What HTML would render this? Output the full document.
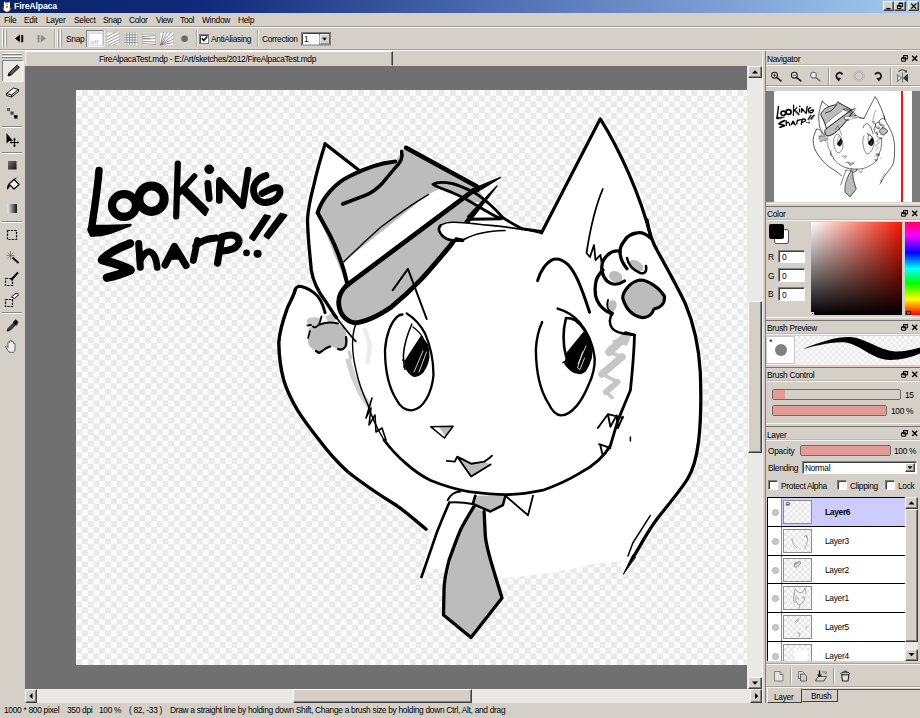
<!DOCTYPE html>
<html><head><meta charset="utf-8"><title>FireAlpaca</title>
<style>
*{box-sizing:border-box;margin:0;padding:0}
html,body{width:920px;height:718px;overflow:hidden;background:#d4d0c8}
body{position:relative;font-family:"Liberation Sans",sans-serif;font-size:8.4px;color:#000;line-height:1;letter-spacing:-0.3px}
.a{position:absolute}
.t{position:absolute;white-space:nowrap;line-height:10px;height:10px}
.hl{position:absolute;height:1px}
.vl{position:absolute;width:1px}
.btn{position:absolute;background:#d4d0c8;border:1px solid;border-color:#fff #404040 #404040 #fff;box-shadow:inset -1px -1px 0 #808080}
.sunk{position:absolute;background:#fff;border:1px solid;border-color:#808080 #fff #fff #808080;box-shadow:inset 1px 1px 0 #404040}
.bar{position:absolute;height:11px;border:1px solid #6b6b6b;border-radius:2px;background:#d4d0c8;overflow:hidden}
.bar i{position:absolute;left:0;top:0;bottom:0;background:#e29a96;display:block}
.chk{position:absolute;width:10px;height:10px;background:#fff;border:1px solid;border-color:#808080 #fff #fff #808080;box-shadow:inset 1px 1px 0 #404040}
.eye{position:absolute;left:4px;top:11px;width:7px;height:7px;border-radius:4px;background:#c9c9c9;border:1px solid #b0b0b0}
.th{position:absolute;left:15px;top:2px;width:29px;height:24px;border:1px solid #8c8c8c;background:conic-gradient(#e6e6e6 25%,#fbfbfb 0 50%,#e6e6e6 0 75%,#fbfbfb 0) 0 0/5.75px 5.75px}
.ck{background:conic-gradient(#e9e9e9 25%,#fbfbfb 0 50%,#e9e9e9 0 75%,#fbfbfb 0) 0 0/11.5px 11.5px}
</style></head><body>
<div class="a" id="titlebar" style="left:0;top:0;width:920px;height:13px;background:linear-gradient(90deg,#0a246a 0%,#10297a 22%,#5577b8 58%,#a6caf0 100%)"></div>
<div class="t" style="left:14px;top:1px;color:#fff;font-weight:bold;font-size:8.8px;letter-spacing:-0.2px">FireAlpaca</div>
<svg class="a" style="left:0;top:0" width="14" height="13" viewBox="0 0 14 13">
 <circle cx="6.900" cy="6.800" r="5.100" fill="#1a1008"/>
 <path d="M2.300 6.500c0 3 1.500 5 4.600 5.200c3-.2 4.600-2.200 4.600-5.200c-.8 1.500-1.500 2-2.500 2.300h-4.200c-1-.3-1.800-1-2.500-2.300z" fill="#e8660c"/>
 <path d="M4.300 1.200l.9 1.300h3.400l.9-1.300l.5 2.500v5c0 1.800-1.200 2.900-3.100 2.900s-3.100-1.100-3.100-2.900v-5z" fill="#fff"/>
 <rect x="6" y="3.300" width="1.700" height="1.600" fill="#aaa"/>
 <rect x="6" y="6.700" width="1.800" height="1" fill="#d4500a"/>
 <rect x="5.800" y="5.800" width="2.200" height=".7" fill="#556"/>
</svg>
<div class="btn" style="left:883px;top:1px;width:11px;height:10px"></div>
<div class="btn" style="left:894px;top:1px;width:12px;height:10px"></div>
<div class="btn" style="left:908px;top:1px;width:11px;height:10px"></div>
<svg class="a" style="left:880px;top:0" width="40" height="13" viewBox="880 0 40 13">
 <path d="M886 8.6h4.5" stroke="#000" stroke-width="1.4"/>
 <path d="M899 3.2h3.6v3.2h-3.6zM897.4 5.6h3.6v3h-3.6z" fill="none" stroke="#000" stroke-width="1"/>
 <path d="M899 3.4h3.6M897.4 5.8h3.6" stroke="#000" stroke-width="1.3"/>
 <path d="M911.2 3.6l5 5M916.2 3.6l-5 5" stroke="#000" stroke-width="1.3"/>
</svg>
<div class="t" style="left:4px;top:15px">File</div>
<div class="t" style="left:24px;top:15px">Edit</div>
<div class="t" style="left:46px;top:15px">Layer</div>
<div class="t" style="left:74px;top:15px">Select</div>
<div class="t" style="left:103px;top:15px">Snap</div>
<div class="t" style="left:129px;top:15px">Color</div>
<div class="t" style="left:156px;top:15px">View</div>
<div class="t" style="left:180px;top:15px">Tool</div>
<div class="t" style="left:202px;top:15px">Window</div>
<div class="t" style="left:238px;top:15px">Help</div>
<div class="hl" style="left:0;top:26px;width:920px;background:#a5a29b"></div>
<div class="hl" style="left:0;top:27px;width:920px;background:#f4f3f0"></div>
<svg class="a" style="left:0;top:27px" width="340" height="24" viewBox="0 27 340 24">
 <!-- grips -->
 <g stroke-width="1">
  <path d="M2.5 29.5v18M5.5 29.5v18M57.5 29.5v18M60.5 29.5v18" stroke="#fff"/>
  <path d="M3.5 29.5v18M6.5 29.5v18M58.5 29.5v18M61.5 29.5v18" stroke="#a09d96"/>
  <path d="M54.5 29v19M196.500 30v17M257.5 30v17" stroke="#aeaba4"/>
  <path d="M55.5 29v19M197.500 30v17M258.5 30v17" stroke="#efede9"/>
 </g>
 <!-- prev / next -->
 <path d="M15 38.5l5-4v8zM21.3 35h1.9v7.2h-1.9z" fill="#000"/>
 <path d="M45.8 38.500l-5-4v8zM37.600 35h1.900v7.200h-1.900z" fill="#8a8a8a"/>
 <!-- snap off (sunken) -->
 <rect x="86.500" y="30.500" width="17" height="16" fill="#e6e3dd" stroke="#808080"/>
 <path d="M87 46.500h17v-16" fill="none" stroke="#fff"/>
 <rect x="89" y="33.300" width="13.500" height="12.300" fill="#fff" stroke="#c8c8c8" stroke-width=".6"/>
 <text x="91" y="44.300" font-size="5.500" fill="#9a9a9a" font-family="Liberation Sans" letter-spacing=".6">off</text>
 <!-- diag -->
 <g stroke="#7a7a7a" stroke-width=".8" fill="#fff">
  <rect x="106.600" y="32.200" width="13.200" height="13" stroke="#c0c0c0" stroke-width=".6"/>
  <path d="M106.600 37l9-4.800M106.600 40l13.200-6.500M106.600 43l13.200-6.500M108 45.200l11.800-5.700M113 45.200l6.800-3.200"/>
  <rect x="124.200" y="32.200" width="13.500" height="13" stroke="#c0c0c0" stroke-width=".6"/>
  <path d="M126.800 32.200v13M129.500 32.200v13M132.200 32.200v13M134.900 32.200v13M124.200 34.800h13.500M124.200 37.400h13.500M124.200 40h13.500M124.200 42.600h13.500"/>
  <rect x="142.200" y="32.200" width="13.300" height="13" stroke="#c0c0c0" stroke-width=".6"/>
  <path d="M142.200 34h13.300M142.200 36.500l13.300-.8M142.200 39l13.300 -.3M142.200 41.200l13.300 .8M142.200 43.500l13.300 .9M142.200 37.800l8 1"/>
  <rect x="160" y="32.200" width="13.500" height="13" stroke="#c0c0c0" stroke-width=".6"/>
  <path d="M160.500 45l3-12.800M160.500 45l6.500-12.800M160.500 45l10.500-12.800M160.500 45l13-10M160.500 45l13-6M160.500 45l13-2.500"/>
 </g>
 <circle cx="184.600" cy="38.700" r="3.300" fill="#6a6a6a"/>
 <!-- checkbox -->
 <rect x="199.500" y="34.500" width="9" height="9" fill="#fff" stroke="#808080"/>
 <path d="M200.500 43v-7.500h7.500" fill="none" stroke="#404040"/>
 <path d="M201.800 38.300l1.900 2.200l3.500-4" fill="none" stroke="#000" stroke-width="1.500"/>
 <!-- combo -->
 <rect x="301.500" y="32.500" width="29" height="12.500" fill="#fff" stroke="#808080"/>
 <path d="M302.500 44.500v-11h27.500" fill="none" stroke="#404040"/>
 <rect x="319.500" y="34" width="10" height="10" fill="#d4d0c8" stroke="#404040" stroke-width=".8"/>
 <path d="M320 43.500v-9h9" fill="none" stroke="#fff"/>
 <path d="M322 37.800h5l-2.500 2.800z" fill="#000"/>
</svg>
<div class="t" style="left:66px;top:34px">Snap</div>
<div class="t" style="left:211px;top:34px">AntiAliasing</div>
<div class="t" style="left:262px;top:34px">Correction</div>
<div class="t" style="left:304px;top:34px">1</div>
<div class="hl" style="left:0;top:49px;width:920px;background:#a5a29b"></div>
<div class="hl" style="left:0;top:50px;width:920px;background:#f4f3f0"></div>
<svg class="a" style="left:0;top:51px" width="25" height="310" viewBox="0 51 25 310">
 <!-- grip -->
 <path d="M2 53.500h20M2 56.500h20" stroke="#fff"/>
 <path d="M2 54.500h20M2 57.500h20" stroke="#808080"/>
 <!-- selected pencil -->
 <rect x="2" y="60" width="21" height="21" fill="#ebe9e4"/>
 <path d="M2.500 81v-20.500h20.500" fill="none" stroke="#808080"/>
 <path d="M2.500 81.500h20.500v-21" fill="none" stroke="#fff"/>
 <path d="M8 76l1.200-3.500l8-7.500l2.300 2.300l-8 7.500z" fill="#555" stroke="#000" stroke-width=".8"/>
 <path d="M8 76l1.200-3.500l2.300 2.300z" fill="#000"/>
 <!-- eraser -->
 <path d="M6.500 93.500l7-5.500l5 1.500l-7 5.500z M6.500 93.500v2l5 1.500v-2 M11.500 97l7-5.500v-2" fill="#eee" stroke="#000" stroke-width=".9" stroke-linejoin="round"/>
 <!-- dot tool -->
 <rect x="7" y="108" width="3.200" height="3.200" fill="#666"/><rect x="10.500" y="111.500" width="3.200" height="3.200" fill="#444"/><rect x="14" y="115" width="3.500" height="3.500" fill="#000"/>
 <path d="M2 126.500h20M2 152.500h20M2 221.500h20M2 312.500h20" stroke="#8a8780"/>
 <path d="M2 127.500h20M2 153.500h20M2 222.500h20M2 313.500h20" stroke="#fff"/>
 <!-- move -->
 <path d="M6.500 133v10.500l2.800-2.500l3.700 0z" fill="#000"/>
 <path d="M14.500 139v7M11 142.500h7" stroke="#000" stroke-width="1.200"/>
 <path d="M14.500 137.800l-1.500 1.800h3zM14.500 147.200l-1.500-1.800h3zM9.800 142.500l1.800-1.500v3zM19.200 142.500l-1.800-1.500v3z" fill="#000"/>
 <!-- fill rect -->
 <defs><linearGradient id="g1" x1="0" y1="0" x2="1" y2="1"><stop offset="0" stop-color="#777"/><stop offset="1" stop-color="#111"/></linearGradient>
 <linearGradient id="g2" x1="0" y1="0" x2="1" y2="0"><stop offset="0" stop-color="#eee"/><stop offset="1" stop-color="#111"/></linearGradient></defs>
 <rect x="8" y="161" width="8.500" height="8.500" fill="url(#g1)"/>
 <!-- bucket -->
 <path d="M9 184l5-4.500l5 5l-5 4.500z" fill="#fff" stroke="#000" stroke-width="1.200" stroke-linejoin="round"/>
 <path d="M9 184c-2 1-2.500 3.500-1.500 6c1-2 2-3.500 3-4.500z" fill="#000"/>
 <path d="M14 179.500l2.500-1.500" stroke="#000"/>
 <!-- gradient -->
 <rect x="7.500" y="204" width="9.500" height="9" fill="url(#g2)"/>
 <!-- select rect -->
 <rect x="7.500" y="230.500" width="9" height="9" fill="none" stroke="#000" stroke-width="1.200" stroke-dasharray="2.200 1.200"/>
 <!-- wand -->
 <path d="M12.500 257.500l6 5.500" stroke="#000" stroke-width="1.800"/>
 <path d="M10.500 251v9M6.500 255.500h8M7.800 252.500l5.500 6M13.300 252.500l-5.500 6" stroke="#666" stroke-width=".7"/>
 <!-- select pen -->
 <rect x="5.500" y="278.500" width="7" height="7" fill="none" stroke="#000" stroke-width="1.200" stroke-dasharray="2.200 1.200"/>
 <path d="M11 280l7-7.500" stroke="#000" stroke-width="2"/>
 <!-- select eraser -->
 <rect x="5.500" y="299.500" width="7" height="7" fill="none" stroke="#000" stroke-width="1.200" stroke-dasharray="2.200 1.200"/>
 <path d="M11.500 297l4.500-4l3 1.500l-4.500 4z" fill="#eee" stroke="#000" stroke-width=".9"/>
 <!-- eyedropper -->
 <path d="M7 331l1-2.500l6-6l2 2l-6 6z" fill="#444" stroke="#000" stroke-width=".8"/>
 <path d="M13.500 321.500l3.500 3.500M15 320l3 3" stroke="#000" stroke-width="1.800"/>
 <!-- hand -->
 <path d="M9 352c-1.500-2-3-4-3.500-5.500c.5-1 1.500-.5 2.500 1v-5c.5-1 1.500-1 1.800 0v-1.500c.5-1 1.500-1 1.800 0v1c.5-1 1.500-.8 1.800 .2v1.300c.5-.8 1.500-.5 1.600 .5v5c0 1.500-.8 2.500-1.500 3.500z" fill="#eee" stroke="#444" stroke-width=".8" stroke-linejoin="round"/>
</svg>
<div class="a" style="left:25px;top:51px;width:368px;height:15px;border:1px solid;border-color:#fff #404040 #d4d0c8 #fff;box-shadow:inset -1px 0 0 #808080"></div>
<div class="t" style="left:99px;top:54px">FireAlpacaTest.mdp - E:/Art/sketches/2012/FireAlpacaTest.mdp</div>
<div class="a" id="work" style="left:25px;top:66px;width:722px;height:623px;background:#707070"></div>
<div class="a ck" id="canvas" style="left:76px;top:90px;width:671px;height:575px;background-size:11.51px 11.5px;background-position:0.35px 0"></div>
<svg class="a" style="left:76px;top:90px" width="671" height="575" viewBox="76 90 671 575">
<g id="artw" fill="#fff" stroke="#fff" stroke-width="4.5" stroke-linejoin="round">
 <!-- white body fill -->
 <path d="M325 143 L359 170 C372 165 385 162 395 161 L401.6 151 L406 147.5 L477 186 L490.5 205 L502.7 216.5 L521.9 228 L541.4 232.9 L600.3 118 C620 150 640 195 650.5 235 C652 242 655 247 658 252 C668 270 678 288 685.3 303.6 C693 322 698.8 345 700.3 372 C701.4 400 700.6 425 698.5 442 C696.5 458 693 470 687.5 479 C680 491 668 505 657.9 517.8 C651 527 645 537 640.3 545.4 L624 573 L623 558 L590 562 L574.8 566 L540 572 L503.5 576 L449 567 L425 566 L435.5 523 L426 529.2 C416 521 405 511 395 504.5 C378 494 362 483 348 472 C338 463 328 452 318 438.5 C312 431 305 422 297.6 410.4 C290 398 280 370 278.8 342.7 C279 325 281 312 285 305 L294 288 L307.7 285 L318 292 L312.6 262 C308 240 307 225 308 215 C310 190 318 160 325 143Z"/>
</g>
<g id="artg" fill="#bcbcbc" stroke="none">
 <!-- hat crown -->
 <path d="M317.6 212.8 C322 198 335 183 350 176 C365 168 380 163 395.3 161.4 L401.6 151.4 L406 147.8 L477 186.5 L487 204 L470 201 L452 192.5 L438.7 189.5 L428.3 194.6 L343.9 261.7 L347 286 Z"/>
 <!-- hat brim -->
 <path d="M346.4 285.6 L463 196.5 L479 206.5 L469.6 218.3 L450.5 245.4 C440 258 430 270 420.4 280.2 C410 291 400 300 390.3 307.8 C378 316 366 322 355.2 322.8 C345 322 338 313 338.9 305.2 Z"/>
 <!-- band (white) -->
 <path d="M343.9 261.7 L428.3 194.6 L438.7 189.5 L452 192.5 L463.5 197.8 L347 286 Z" fill="#fff"/>
 <!-- left paw pad -->
 <path d="M308.800 328.900 C311.300 325.100 315 324 321.400 323.900 C330 322.600 335 322 340.200 325.100 C344 328 346.500 332 346.400 335.200 C347 340 346.500 343 346.400 345.200 C344 349 342 350 340.200 350.200 C336 348 333 346.500 330.100 346.400 C326 348 323.500 351 321.400 351.500 C318 351.500 316.500 350.500 315.100 350.200 C311.500 348.500 309.500 346.500 308.800 345.200 C307.500 340 307.500 333 308.800 328.900Z"/>
 <path d="M306.900 320.100 C308 317.500 312 317 317.600 317.600 C320 318 321.500 319 321.400 320.100 C321.500 323 320.500 324.500 320.100 325.100 L311.300 326.400 C308.500 326 307 324 306.900 320.100Z" fill="#c8c8c8"/>
 <path d="M325.500 316 L333 313.500 L337 320 L328 323Z" fill="#c8c8c8"/>
 <!-- right paw pads -->
 <ellipse cx="635.7" cy="266" rx="8" ry="5.3" transform="rotate(28 635.7 266)"/>
 <ellipse cx="615.7" cy="276.6" rx="7" ry="5.3" transform="rotate(25 615.7 276.6)"/>
 <ellipse cx="612" cy="306" rx="4.5" ry="6" transform="rotate(20 612 306)"/>
 <path d="M640 280 C648 280 660 288 664.5 296.6 C665 304 660 308 654 309 C652 315 647 318 641.8 317.5 C633 316 626 309 622.7 298.3 C623 290 632 281 640 280Z"/>
 <!-- cheek scribble right -->
 <g fill="none" stroke="#c6c6c6" stroke-linecap="round" stroke-linejoin="round">
  <path d="M626 336 L609 352" stroke-width="8"/>
  <path d="M622 357 L602 374" stroke-width="7.500"/>
  <path d="M617.500 382 L606 392" stroke-width="6"/>
  <path d="M609 352 L622 357 M602 374 L617.500 382 M606 392 L612 397.500" stroke-width="3.500"/>
 </g>
 <path d="M611 341 L632 333.500 L627 346Z" fill="#c6c6c6"/>
 <!-- left cheek shading -->
 <path d="M348.500 361 L353 376 L360 392 L369 406" fill="none" stroke="#d0d0d0" stroke-width="5.500" stroke-linecap="round" stroke-linejoin="round"/>
 <path d="M349 352 L351 358" fill="none" stroke="#c8c8c8" stroke-width="3" stroke-linecap="round"/>
 <path d="M365 330 L370 345 L368 362" fill="none" stroke="#ececec" stroke-width="4.500" stroke-linecap="round"/>
 <!-- nose -->
 <path d="M439 427 L453 426.2 L445 436Z"/>
 <!-- mouth -->
 <path d="M457.2 456.700 L471.100 476.500 L490.600 464.500 L484.300 461.600 L471.100 463.700Z"/>
 <!-- tie knot and body -->
 <path d="M475.3 495.7 L505.4 495.7 L502.9 505.2 L490.4 511.5 L472.8 504Z"/>
 <path d="M474 506.5 L484.1 511.5 C485 525 487 545 492.9 568 L502 598 L471 637.5 L443.5 615 C444 590 448 565 460.3 530.3 Z"/>
</g>
<g id="artl" fill="none" stroke="#000" stroke-width="3.300" stroke-linecap="round" stroke-linejoin="round">
 <!-- TEXT -->
 <g stroke-width="7">
  <path d="M99 170.500 C97.500 190 94 212 91.300 230" stroke-width="7.400"/>
  <path d="M88.500 229 L91 235.500 C105 236.500 118 230 130.500 225 C118 226 105 226 95 226 Z" fill="#000" stroke-width="2.500"/>
  <ellipse cx="124" cy="205.500" rx="12" ry="11.300" stroke-width="8.200"/>
  <ellipse cx="151.500" cy="198.700" rx="12.700" ry="12.700" stroke-width="9"/>
  <path d="M177.800 163.500 L176.200 216.500" stroke-width="6.200"/>
  <path d="M177 195.500 L194.500 176" stroke-width="5.600"/>
  <path d="M179.500 189.500 L184.500 186.500 L207.500 209.500 L205 214.500 Z" fill="#000" stroke-width="3"/>
  <path d="M209.200 169.300 L209.300 169.300" stroke-width="9.600"/>
  <path d="M207.800 183.500 L209.200 198.500" stroke-width="6.800"/>
  <path d="M219.300 182.500 L219.300 200.500 M219.600 180.500 L242.600 205.800 L248.200 170" stroke-width="6.600"/>
  <path d="M266 175.500 C258 178 253 184 253.500 191 C254.500 199 260 203 266 202.500 C274 202 280.500 196.500 280 190.500 C279.600 185.500 274 187 262 193.500" stroke-width="6.800"/>
  <path d="M130 243.500 C118 248 107 254 102 260 C112 262.500 124 266 130.500 270 C123 273.500 114 276 107 277.600" stroke-width="8.600"/>
  <path d="M138.700 243.500 L140.300 267.300" stroke-width="7"/>
  <path d="M140.300 260.400 C143 254.500 147 251 150 251.800 C154 253 156.500 260 157.200 267.500" stroke-width="6.600"/>
  <path d="M165 265 L174.500 246.500 L186 265.500" stroke-width="7.200"/>
  <path d="M169.500 258.500 L174.500 247 L181.500 258 Z" fill="#000" stroke-width="3"/>
  <path d="M197.500 240.500 L193.300 260.500 M195.700 246 C200 241.500 206 238.500 216 238" stroke-width="6.800"/>
  <path d="M222 237 L217.500 263.200" stroke-width="7"/>
  <path d="M222 237 C228 234.500 234 234 237.500 237.500 C241 241.500 238 246.500 233 248.800 C230 250 226 250.800 222.500 251" stroke-width="7"/>
  <path d="M246.500 252.800 L246.600 252.800" stroke-width="6.800"/>
  <path d="M257.500 253.800 L257.600 253.800" stroke-width="8"/>
 </g>
 <path d="M269.500 216.500 L265 215.500 L250.500 237.500 L253.800 239.800Z M286 215.500 L280.800 214 L265 235.500 L268.500 238Z" fill="#000" stroke-width="2.800"/>

 <!-- left ear -->
 <path d="M325.1 143.9 C320 160 316 175 313.8 185.2 C310 200 307 212 307.6 222.9 C308 240 310 255 311.300 270 C313 282 319 293 326.400 302.600 C330 308 333 313 336.400 317.600" stroke-width="3.300"/>
 <path d="M336.400 317.600 C343 326 349 334 355.800 341.400" stroke-width="1.800"/>
 <path d="M325.1 143.9 L359 170.2"/>
 <!-- hat crown outline -->
 <path d="M347.7 285.6 L343.9 270.5 C340 258 335 245 330 235.4 L317.6 212.8 C322 198 335 183 350 176 C365 168 380 163 395.3 161.4" stroke-width="4"/>
 <path d="M401.6 151.4 C403 158 401 162 395 168 L382.8 182.7 C377 189 371 193 365.2 195.3 L342.7 204" stroke-width="3.5"/>
 <path d="M406 147.8 L477 186.5" stroke-width="4.5"/>
 <!-- band thin line -->
 <path d="M343.9 261.7 C360 246 372 235 380 227.800 C398 214 414 203 428.300 194.600" stroke-width="1.400"/>
 <!-- brim line + tuft 1 -->
 <path d="M473 190.8 L346.4 285.6 C340 292 338 299 338.9 305.2 C340 315 347 322 355.2 322.8 C366 322 378 316 390.3 307.8 C400 300 410 291 420.4 280.2 C430 270 440 258 450.5 245.4 L469.6 218.3" stroke-width="4.800"/>
 <path d="M471 189.5 L474.5 193.5 L500.6 177.4 Z M467.5 216.5 L471.5 219.5 L497 186 Z" fill="#000" stroke-width="1.2"/>
 <!-- brim loop -->
 <path d="M541 231.4 L521.9 228.8 C515 225 508 221 502.7 217.5 C498 212 494 208 490.5 205 C485 200 479 195 473 192 C465 188 458 185 452 183.5 C444 182 436 182.5 433.1 184.4 C437 187 444 189.5 452 192.5 C460 196 466 199 470 201.5 C477 205.5 482 208.5 487 211.4 C493 215 498 217.5 501.5 218.8 L471.4 219.2" stroke-width="2.900"/>
 <!-- fluff -->
 <path d="M521.9 229.5 C505 226.5 495 226 477 224 C470 223.2 460 222 452 222.3 C445 222.5 437.5 225 439.2 230.5 C441 236 446 239.5 454 241 C458 241.8 462 241 466 238.5 C475 233.5 490 231 505 230.5" fill="#fff" stroke-width="1.6"/>
 <path d="M440.5 225.5 C438 228 439 232 442 235.5 C446 239.5 452 241 458.5 240.2" stroke-width="2.6"/>
 <path d="M456 239.2 L462.5 240.3" stroke-width="3.8"/>
 <!-- tuft on brim -->
 <path d="M392.8 290.2 L407.9 268.9 L426.7 319" stroke-width="2"/>
 <!-- head top + right ear -->
 <path d="M519.5 228 L541.4 232.9" stroke-width="2"/>
 <path d="M541.4 232.9 L600.3 118.8 C620 150 640 195 650.5 235.4" stroke-width="3.2"/>
 <path d="M602.8 189 C596 205 590 230 586.5 253 L590 257 L594 245 L595.5 260 L600.5 255 L601.5 262" stroke-width="1.8"/>
 <!-- right arm outer -->
 <path d="M647 220 C649 232 652 242 658 252 C668 270 678 288 685.3 303.6 C693 322 698.8 345 700.3 372 C701.4 400 700.6 425 698.5 442 C696.5 458 693 470 687.5 479 C680 491 668 505 657.9 517.8 C651 527 645 537 640.3 545.4 L634 556" stroke-width="3.3"/>
 <path d="M635.300 557 L632.600 555.200 L623.500 574Z" fill="#000" stroke-width="1"/>
 <path d="M650.4 515.3 L632.8 543 L628 556" stroke-width="1.5"/>
 <!-- right paw -->
 <path d="M650.5 238 C645 233 640 232 636.6 233 C630 234 626 238 624.4 240.9 C621 245 620 249 620 251.3 C620 258 623 264 627 268.7"/>
 <path d="M627 258 C628 264 633 270 640 273 C645 274.5 647 271 646 266" stroke-width="2.5"/>
 <path d="M620 251.3 C614 250 608 253 603.5 260 C600 267 602 276 607 281 C612 285 617 286 624.4 281"/>
 <path d="M603 270 C598 275 596 280 595.7 282.7 C594 292 596 300 600 305.3 C603 309 607 312 612 314"/>
 <path d="M608 300 C606 306 608 311 612.5 313" stroke-width="2"/>
 <path d="M640 280 C648 280 660 288 664.5 296.6 C665 304 660 308 654 309 C652 315 647 318 641.8 317.5 C633 316 626 309 622.7 298.3 C623 290 632 281 640 280Z" stroke-width="3.2"/>
 <path d="M612.5 313 C609 318 609 324 612 328 C616 333 625 334 634.9 335" stroke-width="2.5"/>
 <!-- jaw right / inner arm -->
 <path d="M625.4 332.6 L634.5 335 C634 355 632 375 630.4 390.3 L617.9 420.4 L610.4 445.5 C605 455 595 465 580.7 472.6 C570 479 555 486 543 490.2 C530 493 518 494.7 505.4 494.7 C492 494.5 480 493 467.8 491.5 C455 489 442 485 430.2 480.2 C420 475 412 469 405 462.6 C396 455 390 448 384 440" stroke-width="2.8"/>
 <path d="M384 440 C378 430 372 418 368 405 C362 392 358 380 356 370 C353 358 352 345 353 336 C353.5 331 354.5 327 356 324" stroke-width="1.4"/>
 <path d="M630.4 437 L630.4 441" stroke-width="1.5"/>
 <!-- fur marks right -->
 <path d="M597.800 428 L607.900 414.200 L610.400 426.700 L616.600 415.400 L617.900 428 L622.900 416.700 M607.900 414.200 L622.900 417.900 M600.300 445.500 L602.800 455.500 L610.400 446.800 M599.100 444.200 L610.400 448" stroke-width="1.900"/>
 <!-- fur marks left -->
 <path d="M372 398 L366 418 L371 408 L369 425 L375 415 L376 432 L382 428 L386 440" stroke-width="1.6"/>
 <!-- right brow -->
 <path d="M537.6 280.6 C540 272 546 262 553.9 259.2 C560 258 564 261 567.7 264.3 C575 272 580 283 589.6 312.3" stroke-width="3"/>
 <!-- left eye -->
 <path d="M406.700 313.400 C414 318 421 326 425 333.400 C430 345 433.500 360 433.500 375 C432 392 424 409 411.800 410.300 C404 410.500 399.500 405.500 396.700 400 C389 388 385 370 385 350 C386 335 391 322 397.500 316.500 C399 315 401 314.500 402.500 314.500" stroke-width="2.300"/>
 <path d="M411.800 324.200 C407 335 404 346 403.400 355 C403.500 361 404 366 405 369.300" stroke-width="1.600"/>
 <path d="M413 327 C417 330 421 334 423 338" stroke-width="1.300"/>
 <path d="M421.300 336.300 L405 361.300 L406.300 368.800 C409 373 412 376 415 376.300 C418 376 420.500 374.500 422.500 372.500 C426 368 428 363 428.800 357.500 C429 353 428.500 349 427.500 345 Z" fill="#000" stroke-width="1.400"/>
 <path d="M423 351 L414 372 M426.500 352 L419 372" stroke="#fff" stroke-width=".8"/>
 <path d="M402.500 360 L406.500 362.500 M403.500 367 L406.500 366" stroke-width="1.300"/>
 <!-- right eye -->
 <path d="M557.600 308.600 C566 311 574 316 579.300 322.100 C587 331 593 344 594.700 358.300 C595 368 592 378 588.300 385.500 C582 401 572 415 561.200 415.400 C555.500 415.500 551.500 410 548.500 403.600 C541 392 536 372 535.900 349.300 C536.500 338 539 329 542.200 322.100" stroke-width="2.400"/>
 <path d="M566 318 C563 330 563 345 566 356 C570 366 575 372 580 373 C586 372 590 362 590.500 349 C589 335 582 325 575 320 C572 318.500 569 318 566 318Z" stroke-width="2.600"/>
 <path d="M583.800 332.500 L567.500 352.500 L565 363.800 C568 368 571 371 575 372.500 C578 373 582 372.500 585 371.300 C588 367 590 362 591.300 357.500 C591.500 352 591 347 590 342.500 Z" fill="#000" stroke-width="1.400"/>
 <path d="M586 346 L578 364 M582.500 352 L577.500 368 L580 369.500 L584.500 358" stroke="#fff" stroke-width=".8"/>
 <path d="M563 362.500 L566.500 361" stroke-width="1.600"/>
 <!-- nose -->
 <path d="M430.6 426.7 L453.1 426.2 L444.4 438Z" stroke-width="1.5"/>
 <!-- mouth -->
 <path d="M446.800 460.900 L454.800 461.600 L457.200 456.700 L471.100 463.700 L484.300 461.600 C487 460 490 458 492 455.700 M458.500 458.500 L471.100 476.500 L490.600 464.500" stroke-width="1.900"/>
 <!-- left paw -->
 <path d="M307.500 325.500 L311 325 M313 326.500 C315 328.500 318 326.500 319.500 323 C320.500 320.500 321 318.500 321.500 316.500" stroke-width="1.800"/>
 <path d="M310 331 L308 338" stroke-width="1.600"/>
 <path d="M319.500 324.500 C325 322.500 332 322 338 323.500" stroke-width="2"/>
 <path d="M346 337 C346.800 341 346.600 344 345.500 346.500 C343.500 349.500 341 350.300 338 349 M316 351 L319 353 L321.500 351.500 C324 349.500 327 347 330.100 346.600" stroke-width="2.200"/>
 <!-- left arm -->
 <path d="M325.100 312.600 C323 304 320 297 313.800 292.600 C308 288.500 302 286.500 298.800 286.300 C296.500 287 295.500 288.500 295 290" stroke-width="3"/>
 <path d="M295.500 289 C294 295 291 300 287.500 307.600 C283 320 279.500 330 278.800 342.700 C279 356 281 370 283.800 380.300 C287 391 292 401 297.600 410.400 C305 422 312 431 318 438.500 C328 452 338 463 348 472 C362 483 378 494 395 504.500 C405 511 416 521 426 529.200" stroke-width="3.400"/>
 <!-- collar -->
 <path d="M447.7 500.2 C450 495 454 492 460.3 491.5 M449 502.5 C456 502 465 502.5 472.8 504 L475.3 495.7" stroke-width="2"/>
 <path d="M505.4 495.7 L528 515.3 L533 495.7" stroke-width="1.8"/>
 <!-- tie -->
 <path d="M475.3 495.7 L472.8 504 L490.4 511.5 L502.9 505.2 L505.4 495.7" stroke-width="2.5"/>
 <path d="M474 506.5 C468 516 464 523 460.3 530.3 C455 543 452 552 449 560.4 C446 572 444 582 444 590.5 L443.5 615 L471 637.5 L502 598 L492.9 568 C489 555 486 545 485.3 535.3 L484.1 511.5" stroke-width="3.3"/>
 <!-- body left -->
 <path d="M449.3 502.8 C445 512 441 522 437 532 L421.5 577" stroke-width="2.6"/>
</g>

</svg>
<div class="a" style="left:747px;top:66px;width:15px;height:623px;background:#ebe9e5"></div>
<div class="btn" style="left:748px;top:66px;width:14px;height:12px"></div>
<div class="btn" style="left:748px;top:677px;width:14px;height:12px"></div>
<div class="btn" style="left:748px;top:301px;width:14px;height:152px"></div>
<div class="a" style="left:25px;top:689px;width:737px;height:14px;background:#ebe9e5"></div>
<div class="btn" style="left:25px;top:689px;width:12px;height:14px"></div>
<div class="btn" style="left:750px;top:689px;width:12px;height:14px"></div>
<div class="btn" style="left:293px;top:689px;width:179px;height:14px"></div>
<svg class="a" style="left:0;top:0" width="920" height="718">
 <path d="M752 73.5h6l-3-3.2z M752 681.5h6l-3 3.2z M32.5 693v6l-3.2-3z M755 693v6l3.2-3z" fill="#000"/>
</svg>
<div class="vl" style="left:762px;top:51px;height:652px;background:#f4f3f0"></div>
<div class="vl" style="left:765px;top:51px;height:652px;background:#808080"></div>
<div class="t" style="left:767px;top:54px">Navigator</div>
<svg class="a" style="left:897px;top:52px" width="24" height="14" viewBox="0 0 24 14">
 <path d="M6.5 3.5h4v3.4h-4zM4.6 5.8h4v3.4h-4z" fill="#d4d0c8" stroke="#000" stroke-width="1"/>
 <path d="M6.5 3.7h4M4.6 6h4" stroke="#000" stroke-width="1.2"/>
 <path d="M15.2 3.8l5 5.2M20.2 3.8l-5 5.2" stroke="#000" stroke-width="1.3"/>
</svg>
<div class="hl" style="left:766px;top:64px;width:154px;background:#bdbab3"></div>
<div class="hl" style="left:766px;top:65px;width:154px;background:#f4f3f0"></div>
<svg class="a" style="left:766px;top:66px" width="154" height="20" viewBox="766 66 154 20">
 <g fill="none" stroke="#222" stroke-width="1.100">
  <circle cx="774.500" cy="75.200" r="2.900" fill="#e8e8e8"/><path d="M776.700 77.400l4.800 4" stroke-width="1.700"/><path d="M773 75.200h3M774.500 73.700v3" stroke-width=".8"/>
  <circle cx="794.300" cy="75.200" r="2.900" fill="#e8e8e8"/><path d="M796.500 77.400l4.800 4" stroke-width="1.700"/><path d="M792.800 75.200h3" stroke-width=".8"/>
  <circle cx="813.500" cy="75.200" r="2.900" fill="#e8e8e8" stroke="#777"/><path d="M815.700 77.400l4.800 4" stroke-width="1.500" stroke="#777"/>
 </g>
 <path d="M828.500 68v17M890.500 68v17" stroke="#9a978f"/><path d="M829.500 68v17M891.500 68v17" stroke="#fff"/>
 <!-- rotate left -->
 <path d="M842.500 74.500c-1-2-4-2.500-5.500-.5c-1.200 1.800-.6 4 1.200 5.200" fill="none" stroke="#222" stroke-width="1.900"/>
 <path d="M836.200 77.500l5 .6l-2.600 3.600z" fill="#222"/>
 <!-- rotate right -->
 <path d="M875 74.500c1-2 4-2.500 5.500-.5c1.200 1.800 .6 4-1.200 5.200" fill="none" stroke="#222" stroke-width="1.900"/>
 <path d="M881.300 77.500l-5 .6l2.600 3.600z" fill="#222"/>
 <!-- sunburst -->
 <g stroke="#aaa" stroke-width=".9">
  <path d="M859 70v3M859 79v3M853 76h3M862 76h3M854.800 71.800l2.100 2.100M861.100 78.100l2.100 2.100M863.200 71.800l-2.100 2.100M856.900 78.100l-2.100 2.100M856.600 70.500l1 2.600M861.400 70.500l-1 2.600M856.600 81.500l1-2.600M861.400 81.500l-1-2.600M853.500 73.700l2.600 1M853.500 78.300l2.600-1M864.500 73.700l-2.600 1M864.500 78.300l-2.600-1"/>
 </g>
 <!-- flip -->
 <path d="M897.500 74.500l4 3.500l-4 3.500z" fill="#e0e0e0" stroke="#555" stroke-width=".8"/>
 <path d="M907.500 74.500l-4 3.500l4 3.500z" fill="#333" stroke="#222" stroke-width=".8"/>
 <path d="M902.500 72.500v10" stroke="#555" stroke-width=".8"/>
 <path d="M898.500 72c1.500-2.500 5.500-3 7.500-.5" fill="none" stroke="#333" stroke-width="1"/><path d="M907 70l-.3 2.800l-2.600-.8z" fill="#333"/>
</svg>
<div class="hl" style="left:766px;top:85px;width:154px;background:#a5a29b"></div><div class="hl" style="left:766px;top:86px;width:154px;background:#f4f3f0"></div>
<div class="a" style="left:766px;top:91px;width:154px;height:111px;background:#7c7c7c"></div>
<div class="a" style="left:774px;top:91px;width:138px;height:111px;background:#fff"></div>
<svg class="a" style="left:774px;top:91px" width="138" height="111" viewBox="76 90 715 575"><use href="#artw" opacity="0"/><use href="#artg"/><use href="#artl"/></svg>
<div class="a" style="left:901px;top:91px;width:2px;height:111px;background:#f0161c"></div>
<div class="hl" style="left:766px;top:203px;width:154px;background:#f4f3f0"></div>
<div class="hl" style="left:766px;top:206px;width:154px;background:#77746f"></div>
<div class="t" style="left:767px;top:209px">Color</div>
<svg class="a" style="left:897px;top:207px" width="24" height="14" viewBox="0 0 24 14">
 <path d="M6.5 3.5h4v3.4h-4zM4.6 5.8h4v3.4h-4z" fill="#d4d0c8" stroke="#000" stroke-width="1"/>
 <path d="M6.5 3.7h4M4.6 6h4" stroke="#000" stroke-width="1.2"/>
 <path d="M15.2 3.8l5 5.2M20.2 3.8l-5 5.2" stroke="#000" stroke-width="1.3"/>
</svg>
<div class="hl" style="left:766px;top:219px;width:154px;background:#bdbab3"></div>
<div class="hl" style="left:766px;top:220px;width:154px;background:#f4f3f0"></div>
<div class="a" style="left:774px;top:229px;width:15px;height:15px;background:#fff;border:1px solid #555;border-radius:2px"></div>
<div class="a" style="left:769px;top:224px;width:15px;height:15px;background:#000;border-radius:2px"></div>
<div class="t" style="left:768px;top:252px">R</div>
<div class="t" style="left:768px;top:271px">G</div>
<div class="t" style="left:768px;top:289px">B</div>
<div class="sunk" style="left:778px;top:250px;width:27px;height:13px"></div>
<div class="sunk" style="left:778px;top:268px;width:27px;height:14px"></div>
<div class="sunk" style="left:778px;top:287px;width:27px;height:14px"></div>
<div class="t" style="left:782px;top:252px">0</div>
<div class="t" style="left:782px;top:271px">0</div>
<div class="t" style="left:782px;top:290px">0</div>
<div class="a" style="left:811px;top:222px;width:91px;height:93px;background:linear-gradient(0deg,#000,rgba(0,0,0,0)),linear-gradient(90deg,#fff,#f81800)"></div>
<div class="a" style="left:905px;top:222px;width:15px;height:93px;background:linear-gradient(180deg,#ff0060 0%,#ff00ff 14%,#0000ff 33%,#00ffff 50%,#00ff00 66%,#ffff00 83%,#ff0000 100%)"></div>
<div class="a" style="left:811px;top:312px;width:3px;height:3px;border:1px solid #ddd"></div>
<div class="a" style="left:906px;top:311px;width:5px;height:4px;border:1px solid #222;background:#d33"></div>
<div class="hl" style="left:766px;top:317px;width:154px;background:#f4f3f0"></div>
<div class="hl" style="left:766px;top:320px;width:154px;background:#77746f"></div>
<div class="t" style="left:767px;top:323px">Brush Preview</div>
<svg class="a" style="left:897px;top:321px" width="24" height="14" viewBox="0 0 24 14">
 <path d="M6.5 3.5h4v3.4h-4zM4.6 5.8h4v3.4h-4z" fill="#d4d0c8" stroke="#000" stroke-width="1"/>
 <path d="M6.5 3.7h4M4.6 6h4" stroke="#000" stroke-width="1.2"/>
 <path d="M15.2 3.8l5 5.2M20.2 3.8l-5 5.2" stroke="#000" stroke-width="1.3"/>
</svg>
<div class="hl" style="left:766px;top:333px;width:154px;background:#bdbab3"></div>
<div class="hl" style="left:766px;top:334px;width:154px;background:#f4f3f0"></div>
<div class="a ck" style="left:795px;top:336px;width:125px;height:28px;background-size:5.75px 5.75px"></div>
<div class="a" style="left:766px;top:336px;width:29px;height:28px;background:#fff;border:1px solid #c8c8c8"></div>
<div class="a" style="left:775px;top:344px;width:12px;height:12px;border-radius:6px;background:#808080"></div>
<div class="t" style="left:769px;top:337px;font-size:9px">*</div>
<svg class="a" style="left:795px;top:335px" width="125" height="29" viewBox="795 335 125 29">
 <path d="M803 349 C822 341 838 336.500 850 337 C866 338 878 350 895 351.500 C905 351.500 913 349.500 920 347.500 L920 353.500 C912 357 902 360 890 360 C872 359.500 862 345.500 846 342.500 C832 341 815 346 803 349Z" fill="#000"/>
</svg>
<div class="hl" style="left:766px;top:364px;width:154px;background:#f4f3f0"></div>
<div class="hl" style="left:766px;top:367px;width:154px;background:#77746f"></div>
<div class="t" style="left:767px;top:370px">Brush Control</div>
<svg class="a" style="left:897px;top:368px" width="24" height="14" viewBox="0 0 24 14">
 <path d="M6.5 3.5h4v3.4h-4zM4.6 5.8h4v3.4h-4z" fill="#d4d0c8" stroke="#000" stroke-width="1"/>
 <path d="M6.5 3.7h4M4.6 6h4" stroke="#000" stroke-width="1.2"/>
 <path d="M15.2 3.8l5 5.2M20.2 3.8l-5 5.2" stroke="#000" stroke-width="1.3"/>
</svg>
<div class="hl" style="left:766px;top:380px;width:154px;background:#bdbab3"></div>
<div class="hl" style="left:766px;top:381px;width:154px;background:#f4f3f0"></div>
<div class="bar" style="left:772px;top:389px;width:129px"><i style="width:12px"></i></div>
<div class="bar" style="left:772px;top:405px;width:115px"><i style="width:115px"></i></div>
<div class="t" style="left:905px;top:390px">15</div>
<div class="t" style="left:891px;top:406px">100 %</div>
<div class="hl" style="left:766px;top:423px;width:154px;background:#f4f3f0"></div>
<div class="hl" style="left:766px;top:426px;width:154px;background:#77746f"></div>
<div class="t" style="left:767px;top:430px">Layer</div>
<svg class="a" style="left:897px;top:427px" width="24" height="14" viewBox="0 0 24 14">
 <path d="M6.5 3.5h4v3.4h-4zM4.6 5.8h4v3.4h-4z" fill="#d4d0c8" stroke="#000" stroke-width="1"/>
 <path d="M6.5 3.7h4M4.6 6h4" stroke="#000" stroke-width="1.2"/>
 <path d="M15.2 3.8l5 5.2M20.2 3.8l-5 5.2" stroke="#000" stroke-width="1.3"/>
</svg>
<div class="hl" style="left:766px;top:439px;width:154px;background:#bdbab3"></div>
<div class="hl" style="left:766px;top:440px;width:154px;background:#f4f3f0"></div>
<div class="t" style="left:768px;top:446px">Opacity</div>
<div class="bar" style="left:800px;top:445px;width:91px"><i style="width:91px"></i></div>
<div class="t" style="left:894px;top:446px">100 %</div>
<div class="t" style="left:768px;top:463px">Blending</div>
<div class="sunk" style="left:802px;top:461px;width:115px;height:13px"></div>
<div class="t" style="left:805px;top:463px">Normal</div>
<div class="btn" style="left:905px;top:463px;width:10px;height:9px"></div>
<svg class="a" style="left:905px;top:463px" width="10" height="9"><path d="M2.5 3.2h5l-2.5 3z" fill="#000"/></svg>
<div class="chk" style="left:768px;top:480px"></div>
<div class="t" style="left:781px;top:481px">Protect Alpha</div>
<div class="chk" style="left:837px;top:480px"></div>
<div class="t" style="left:850px;top:481px">Clipping</div>
<div class="chk" style="left:885px;top:480px"></div>
<div class="t" style="left:898px;top:481px">Lock</div>
<div class="a" style="left:767px;top:497px;width:138px;height:164px;background:#fff;overflow:hidden;border-left:1px solid #000">
<div class="a" style="left:0;top:0.0px;width:137px;height:30px;border-top:1.4px solid #000;background:#ccccff">
 <div class="a" style="left:0;top:0;width:14px;height:29px;background:#fff;border-right:1px solid #8a8a8a"></div>
 <div class="eye"></div><div class="th"></div><svg class="a" style="left:15px;top:2px" width="29" height="24" viewBox="0 0 29 24"><path d="M3 4.500l.3-2l4 .5l-1 1.500h-2.500zM3.500 5.500l3-.5" fill="none" stroke="#333" stroke-width=".7"/></svg>

 <div class="t" style="left:57px;top:9px;font-weight:bold;">Layer6</div></div>
<div class="a" style="left:0;top:28.8px;width:137px;height:30px;border-top:1.4px solid #000;background:#fff">
 <div class="a" style="left:0;top:0;width:14px;height:29px;background:#fff;border-right:1px solid #8a8a8a"></div>
 <div class="eye"></div><div class="th"></div><svg class="a" style="left:15px;top:2px" width="29" height="24" viewBox="0 0 29 24"><path d="M9 9c0 5 2 8 5 10M24 7c1 5 0 9-3 13M21 8l2-2l1 3" fill="none" stroke="#777" stroke-width=".6"/></svg>

 <div class="t" style="left:57px;top:9px;">Layer3</div></div>
<div class="a" style="left:0;top:57.6px;width:137px;height:30px;border-top:1.4px solid #000;background:#fff">
 <div class="a" style="left:0;top:0;width:14px;height:29px;background:#fff;border-right:1px solid #8a8a8a"></div>
 <div class="eye"></div><div class="th"></div><svg class="a" style="left:15px;top:2px" width="29" height="24" viewBox="0 0 29 24"><path d="M11 8l1-3l4-1.500l2 1.500l-5 4.500zM11.500 6l3-1" fill="#ddd" stroke="#555" stroke-width=".6"/></svg>

 <div class="t" style="left:57px;top:9px;">Layer2</div></div>
<div class="a" style="left:0;top:86.4px;width:137px;height:30px;border-top:1.4px solid #000;background:#fff">
 <div class="a" style="left:0;top:0;width:14px;height:29px;background:#fff;border-right:1px solid #8a8a8a"></div>
 <div class="eye"></div><div class="th"></div><svg class="a" style="left:15px;top:2px" width="29" height="24" viewBox="0 0 29 24"><path d="M11 8l1-5l3 3l4 1l3-5l1 6M13 9c-1 4 0 8 3 10c3-1 6-5 6-9M15 11v3M20 10v3M12 7c-2 3-2 7 0 10M17 19l-1 4" fill="none" stroke="#666" stroke-width=".55"/></svg>

 <div class="t" style="left:57px;top:9px;">Layer1</div></div>
<div class="a" style="left:0;top:115.2px;width:137px;height:30px;border-top:1.4px solid #000;background:#fff">
 <div class="a" style="left:0;top:0;width:14px;height:29px;background:#fff;border-right:1px solid #8a8a8a"></div>
 <div class="eye"></div><div class="th"></div><svg class="a" style="left:15px;top:2px" width="29" height="24" viewBox="0 0 29 24"><path d="M12 7l4-4M12.500 8l4-3.500M24 11l-1 3M17 18l-1 4M15 17l1 2" fill="none" stroke="#888" stroke-width=".7"/></svg>

 <div class="t" style="left:57px;top:9px;">Layer5</div></div>
<div class="a" style="left:0;top:144.0px;width:137px;height:30px;border-top:1.4px solid #000;background:#fff">
 <div class="a" style="left:0;top:0;width:14px;height:29px;background:#fff;border-right:1px solid #8a8a8a"></div>
 <div class="eye"></div><div class="th"></div><svg class="a" style="left:15px;top:2px" width="29" height="24" viewBox="0 0 29 24"><path d="M11 8l1-5l3 3l5 1l3-5l2 8l-1 7l-3 4h-6l-2-4z" fill="#fff"/></svg>

 <div class="t" style="left:57px;top:9px;">Layer4</div></div>
</div>
<div class="a" style="left:905px;top:497px;width:13px;height:164px;background:#ebe9e5"></div>
<div class="btn" style="left:905px;top:497px;width:13px;height:12px"></div>
<div class="btn" style="left:905px;top:649px;width:13px;height:12px"></div>
<div class="btn" style="left:905px;top:509px;width:13px;height:133px"></div>
<svg class="a" style="left:905px;top:497px" width="13" height="164"><path d="M3.5 7.5h6l-3-3.2z M3.5 156h6l-3 3.2z" fill="#000"/></svg>
<div class="hl" style="left:766px;top:663px;width:154px;background:#a5a29b"></div><div class="hl" style="left:766px;top:664px;width:154px;background:#f4f3f0"></div>
<svg class="a" style="left:766px;top:665px" width="154" height="22" viewBox="766 665 154 22">
 <path d="M790.500 668v16M833.500 668v16" stroke="#9a978f"/><path d="M791.500 668v16M834.500 668v16" stroke="#fff"/>
 <!-- new layer -->
 <path d="M774.500 671.500h5.500l3 3v6.500h-8.500z" fill="#e4e2dc" stroke="#777" stroke-width=".9"/>
 <path d="M780 671.500v3h3" fill="none" stroke="#777" stroke-width=".8"/>
 <!-- duplicate -->
 <path d="M798.500 671.500h4l2 2v5h-6z" fill="#e4e2dc" stroke="#666" stroke-width=".9"/>
 <path d="M800.500 674h4l2 2v5h-6z" fill="#cfcdc7" stroke="#555" stroke-width=".9"/>
 <!-- merge down -->
 <path d="M815.500 681l2.500-4.500h8.500l-2.500 4.500z" fill="#d8d6d0" stroke="#444" stroke-width=".9"/>
 <path d="M819.500 670.500v5" stroke="#222" stroke-width="1.600"/><path d="M816.800 674.500h5.400l-2.700 3z" fill="#222"/>
 <path d="M822 672h4.500l-1.200 2.500" fill="none" stroke="#555" stroke-width=".8"/>
 <!-- trash -->
 <path d="M841.500 674l1 7h5.500l1-7z" fill="#e4e2dc" stroke="#222" stroke-width="1.100"/>
 <ellipse cx="845.200" cy="673.500" rx="4.200" ry="1.500" fill="#bbb" stroke="#222" stroke-width="1"/>
 <path d="M843.500 671.800c.5-1 3-1 3.500 0" fill="none" stroke="#222" stroke-width=".9"/>
</svg>
<div class="hl" style="left:766px;top:686px;width:154px;background:#a5a29b"></div><div class="hl" style="left:766px;top:687px;width:154px;background:#f4f3f0"></div>
<div class="hl" style="left:802px;top:689px;width:118px;background:#55534f"></div>
<div class="a" style="left:767px;top:688px;width:35px;height:15px;background:#d4d0c8;border:1px solid;border-color:#d4d0c8 #404040 #404040 #fff"></div>
<div class="a" style="left:802px;top:689px;width:36px;height:13px;background:#d4d0c8;border:1px solid;border-color:#55534f #404040 #404040 #d4d0c8"></div>
<div class="t" style="left:774px;top:692px">Layer</div>
<div class="t" style="left:811px;top:691px">Brush</div>
<div class="t" style="left:4px;top:705px">1000 * 800 pixel</div>
<div class="t" style="left:67px;top:705px">350 dpi</div>
<div class="t" style="left:99px;top:705px">100 %</div>
<div class="t" style="left:129px;top:705px">( 82, -33 )</div>
<div class="t" style="left:170px;top:705px">Draw a straight line by holding down Shift, Change a brush size by holding down Ctrl, Alt, and drag</div>
</body></html>
